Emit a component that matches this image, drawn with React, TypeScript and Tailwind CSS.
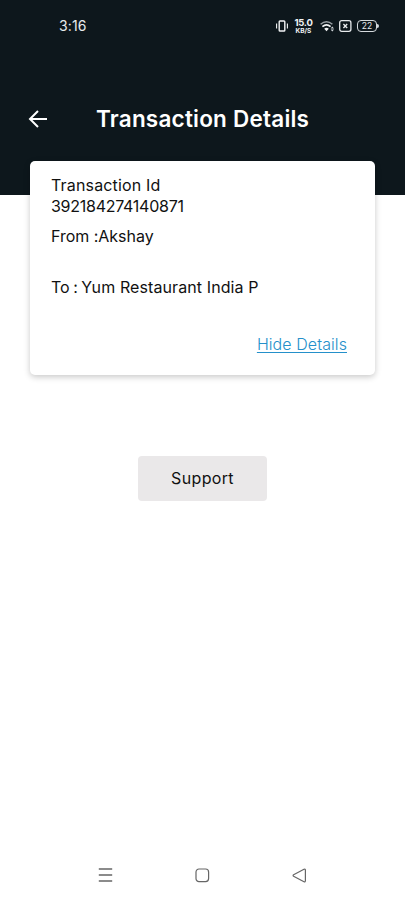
const StatusIcons = () => {
  return (
    <div className="flex items-center">
      <svg width="12" height="12" viewBox="0 0 12 12" fill="none" stroke="#f2f4f5">
        <rect x="3.2" y="1" width="5.6" height="10" rx="0.8" strokeWidth="1.4" />
        <path d="M.6 3.5v5M11.4 3.5v5" strokeWidth="1.1" />
      </svg>
      <div className="ml-[6px] flex w-[19px] flex-col items-center font-bold text-[#f2f4f5]">
        <p className="text-[9.5px] leading-[9px] tracking-[-0.3px]">15.0</p>
        <p className="text-[6.5px] leading-[8px]">KB/S</p>
      </div>
      <svg className="ml-[7px]" width="15" height="12" viewBox="0 0 15 12" fill="none">
        <path d="M.6 4.3Q6.5 -.8 12.4 4.3" stroke="#9aa1a5" strokeWidth="1.5" />
        <path d="M2.4 6.7Q6.5 3.1 10.6 6.7" stroke="#f2f4f5" strokeWidth="1.7" />
        <path d="M4.2 8.8Q6.5 6.9 8.8 8.8L6.5 11.3z" fill="#f2f4f5" />
        <path d="M10.6 8.6l1.7-2.1L14 8.6zM10.6 9.4l1.7 2.1L14 9.4z" fill="#d5dadd" />
      </svg>
      <svg className="ml-[4px]" width="13" height="12" viewBox="0 0 13 12" fill="none" stroke="#e8ebed">
        <rect x=".7" y=".7" width="11.2" height="10.6" rx="2" strokeWidth="1.3" />
        <path d="M4.4 4.1l3.8 3.8M8.2 4.1L4.4 7.9" strokeWidth="1.4" />
      </svg>
      <div className="ml-[5px] flex items-center">
        <div className="flex h-[12px] w-[20px] items-center justify-center rounded-[4px] border border-[#d5dadd] text-[8.5px] leading-none text-[#e8ebed]">
          22
        </div>
        <div className="h-[4px] w-[2px] rounded-r-full bg-[#d5dadd]"></div>
      </div>
    </div>
  );
};

const Header = () => {
  return (
    <header className="h-[195px] bg-[#0d171c] text-white">
      <div className="flex h-[52px] items-center justify-between pr-[26px] pl-[59px]">
        <span className="-mt-[2px] text-[14px] tracking-[0.1px] text-[#e8ebed]">3:16</span>
        <StatusIcons />
      </div>
      <div className="mt-[51px] flex h-8 items-center pl-[28px]">
        <svg width="20" height="20" viewBox="0 0 20 20" fill="none" stroke="white" strokeWidth="2">
          <path d="M19 10H2M10 2L2 10l8 8" />
        </svg>
        <h1 className="ml-[48px] text-[22.5px] font-semibold tracking-[0.22px] whitespace-nowrap">
          Transaction Details
        </h1>
      </div>
    </header>
  );
};

const DetailsCard = () => {
  return (
    <section className="mx-[30px] -mt-[34px] flex h-[214px] flex-col rounded-[5px] bg-white pt-[14px] pr-[28px] pl-[21px] text-[16px] leading-[21px] whitespace-nowrap text-[#111] shadow-[0_2px_6px_rgba(0,0,0,0.22)]">
      <p className="tracking-[0.16px]">Transaction Id</p>
      <p className="tracking-[-0.26px]">392184274140871</p>
      <p className="mt-[9px] tracking-[-0.02px]">From :Akshay</p>
      <p className="mt-[30px]">
        To <span className="-ml-px">:</span> <span className="-ml-px tracking-[0.1px]">Yum Restaurant India P</span>
      </p>
      <a className="mt-[36px] self-end font-light tracking-[0.08px] text-[#2490ca] underline decoration-1 underline-offset-2">
        Hide Details
      </a>
    </section>
  );
};

const NavBar = () => {
  return (
    <nav className="mt-auto flex h-[50px] items-center justify-between px-[98px]">
      <svg width="15" height="16" viewBox="0 0 15 16" stroke="#666" strokeWidth="1.4">
        <path d="M.8 2h13.4M.8 8h13.4M.8 14h13.4" />
      </svg>
      <svg width="15" height="15" viewBox="0 0 15 15" fill="none" stroke="#666" strokeWidth="1.2">
        <rect x="1" y="1" width="12.6" height="12.6" rx="3" />
      </svg>
      <svg width="15" height="15" viewBox="0 0 15 15" fill="none" stroke="#666" strokeWidth="1.2" strokeLinejoin="round">
        <path d="M1.6 6.8L12 1.3Q13.4.8 13.4 2.2v10.6q0 1.4-1.4.9L1.6 8.2Q.6 7.5 1.6 6.8z" />
      </svg>
    </nav>
  );
};

const App = () => {
  return (
    <main className="flex h-[900px] w-[405px] flex-col overflow-hidden bg-white font-['Inter','Liberation_Sans',sans-serif]">
      <Header />
      <DetailsCard />
      <button className="mt-[81px] h-[45px] w-[129px] self-center rounded-[4px] bg-[#eae8e9] pb-[2px] text-[16px] tracking-[0.35px] text-[#111]">
        Support
      </button>
      <NavBar />
    </main>
  );
};

export default App;
